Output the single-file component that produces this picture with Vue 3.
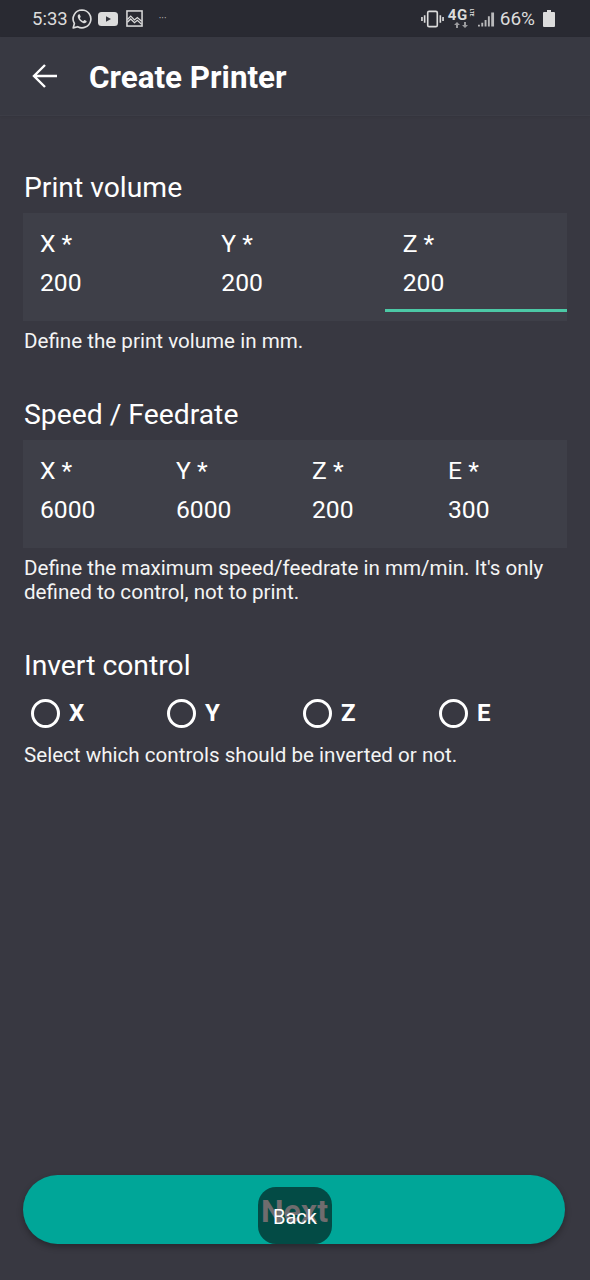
<script setup>
const volume = [
  { label: 'X *', value: '200' },
  { label: 'Y *', value: '200' },
  { label: 'Z *', value: '200', active: true },
]
const speed = [
  { label: 'X *', value: '6000' },
  { label: 'Y *', value: '6000' },
  { label: 'Z *', value: '200' },
  { label: 'E *', value: '300' },
]
const invert = ['X', 'Y', 'Z', 'E']
</script>

<template>
  <div class="page">
    <div class="status">
      <div class="status-left">
        <span class="time">5:33</span>
        <svg class="ic-wa" viewBox="0 0 24 24" width="22" height="22" fill="none">
          <path d="M12 2.2a9.7 9.7 0 0 0-8.3 14.7L2.4 21.7l4.9-1.3A9.7 9.7 0 1 0 12 2.2z" stroke="#dcdcdc" stroke-width="1.8" stroke-linejoin="round"/>
          <path d="M8.6 6.9c-.9.5-1.5 1.6-1.2 3 .6 2.9 3.6 5.9 6.4 6.6 1.5.3 2.6-.2 3.1-1.2.2-.5.2-.9.1-1l-2.2-1.1c-.2-.1-.4 0-.5.1l-.8 1c-.1.1-.3.2-.5.1-1.4-.6-2.6-1.7-3.3-3.1-.1-.2 0-.3.1-.5l.7-.9c.1-.1.1-.3 0-.5l-.9-2.2c-.1-.3-.3-.4-.6-.4z" fill="#dcdcdc"/>
        </svg>
        <svg class="ic-yt" viewBox="0 0 20 16" width="20" height="16">
          <rect x="0" y="1" width="20" height="14" rx="3.5" fill="#dcdcdc"/>
          <path d="M8 5.2l5 2.8-5 2.8z" fill="#33343c"/>
        </svg>
        <svg class="ic-img" viewBox="0 0 18 18" width="17" height="17" fill="none" stroke="#dcdcdc">
          <rect x="1" y="1" width="16" height="16" stroke-width="1.6"/>
          <path d="M1.5 10l3.5-3.5 4 4 3-2.5 4.5 4M1.5 13l3.5-3.5 4 4 3-2.5 4.5 4" stroke-width="1.3"/>
        </svg>
        <span class="dots">···</span>
      </div>
      <div class="status-right">
        <svg viewBox="0 0 24 18" width="23" height="18" fill="none" stroke="#dcdcdc" stroke-width="1.7">
          <rect x="7" y="1" width="10" height="16" rx="1.5"/>
          <path d="M3.8 5v8M1 7v4M20.2 5v8M23 7v4"/>
        </svg>
        <span class="net">
          <span class="net-top"><span class="net-main">4G</span><span class="net-sub">LTE</span></span>
          <svg class="net-arrows" viewBox="0 0 14 6" width="14" height="6" fill="#9b9b9e">
            <path d="M3 0l3 3H4v3H2V3H0zM11 6L8 3h2V0h2v3h2z"/>
          </svg>
        </span>
        <svg class="ic-sig" viewBox="0 0 18 16" width="17" height="16" fill="#b9b9bb">
          <path d="M0 16v-2h2v2zM3.5 16v-4h2v4zM7 16V9h2v7zM10.5 16V5h2v11zM14 16V1h3v15z"/>
        </svg>
        <span class="pct">66%</span>
        <svg viewBox="0 0 12 17" width="12" height="17">
          <path d="M4 0h4v2h3a1 1 0 0 1 1 1v13a1 1 0 0 1-1 1H1a1 1 0 0 1-1-1V3a1 1 0 0 1 1-1h3z" fill="#dcdcdc"/>
        </svg>
      </div>
    </div>

    <header class="appbar">
      <svg class="back" viewBox="0 0 25 24" width="25" height="24" fill="none" stroke="#fff" stroke-width="2.4">
        <path d="M25 12H2M13 1L2 12l11 11"/>
      </svg>
      <h1>Create Printer</h1>
    </header>

    <main class="content">
      <section class="sec-volume">
        <h2>Print volume</h2>
        <div class="panel cols3">
          <div v-for="f in volume" :key="f.label" class="field" :class="{ active: f.active }">
            <span class="lbl">{{ f.label }}</span>
            <span class="val">{{ f.value }}</span>
          </div>
        </div>
        <p class="help">Define the print volume in mm.</p>
      </section>

      <section class="sec-speed">
        <h2>Speed / Feedrate</h2>
        <div class="panel cols4">
          <div v-for="f in speed" :key="f.label" class="field">
            <span class="lbl">{{ f.label }}</span>
            <span class="val">{{ f.value }}</span>
          </div>
        </div>
        <p class="help">Define the maximum speed/feedrate in mm/min. It's only defined to control, not to print.</p>
      </section>

      <section class="sec-invert">
        <h2>Invert control</h2>
        <div class="radios">
          <label v-for="r in invert" :key="r" class="radio">
            <span class="circle"></span>
            <span class="radio-lbl">{{ r }}</span>
          </label>
        </div>
        <p class="help help-invert">Select which controls should be inverted or not.</p>
      </section>
    </main>

    <footer class="foot">
      <button class="next">
        <span class="back-pill"></span>
        <span class="next-txt">Next</span>
        <span class="back-txt">Back</span>
      </button>
    </footer>
  </div>
</template>

<style>
html, body { margin: 0; background: #383841; }
</style>

<style scoped>
* { box-sizing: border-box; }
.page {
  width: 590px;
  height: 1280px;
  display: flex;
  flex-direction: column;
  background: #383841;
  color: #fff;
  font-family: Roboto, "Liberation Sans", sans-serif;
  overflow: hidden;
}
.status {
  height: 37px;
  flex: none;
  background: #292a32;
  display: flex;
  justify-content: space-between;
  align-items: center;
  padding: 0 35px 0 32px;
  color: #dcdcdc;
}
.status-left, .status-right { display: flex; align-items: center; }
.status-left { gap: 4px; }
.time { font-size: 18.5px; }
.ic-wa { margin-left: -1px; }
.ic-yt { margin-left: 1px; }
.ic-img { margin-left: 4px; }
.dots { font-size: 10px; margin-left: 12px; color: #bbb; }
.status-right { gap: 3px; }
.net {
  width: 27px;
  margin-left: 1px;
  height: 19px;
  display: flex;
  flex-direction: column;
  align-items: center;
  color: #dcdcdc;
}
.net-top { display: flex; align-items: flex-start; width: 100%; height: 12px; font-weight: 700; line-height: 12px; }
.net-main { font-size: 15px; transform-origin: left center; letter-spacing: 0.6px; }
.net-sub { font-size: 4.5px; line-height: 5px; writing-mode: vertical-rl; margin-left: 1px; }
.net-arrows { margin-top: 1px; }
.ic-sig { margin-left: 0; }
.pct { font-size: 19px; margin-left: 2px; margin-right: 5px; }
.appbar {
  height: 79px;
  flex: none;
  background: #383942;
  border-bottom: 1px solid #3c3d46;
  display: flex;
  align-items: center;
  padding: 2px 0 0 32px;
  box-shadow: 0 1px 2px rgba(0, 0, 0, 0.06);
}
.back { flex: none; margin-top: -2px; }
h1 {
  margin: 0 0 0 32px;
  font-size: 31.4px;
  font-weight: 700;
  letter-spacing: 0;
}
.content { padding: 0 23px; flex: 1; }
section { display: flex; flex-direction: column; }
h2 {
  margin: 0 0 0 1px;
  font-size: 28.3px;
  line-height: 32px;
  font-weight: 400;
}
.sec-volume { padding-top: 56px; }
.sec-speed { padding-top: 46px; }
.sec-invert { padding-top: 46px; }
.panel {
  margin-top: 9px;
  height: 108px;
  background: #3e3f48;
  display: grid;
}
.cols3 { grid-template-columns: repeat(3, 1fr); }
.cols4 { grid-template-columns: repeat(4, 136px); }
.field {
  padding: 15px 0 0 17px;
  display: flex;
  flex-direction: column;
  position: relative;
}
.lbl { font-size: 24.7px; line-height: 32px; }
.val { font-size: 24.7px; line-height: 32px; margin-top: 7px; }
.field.active::after {
  content: "";
  position: absolute;
  left: -1px;
  right: 0;
  top: 96px;
  height: 3px;
  background: #4cc9a6;
}
.help {
  margin: 8px 0 0 1px;
  font-size: 20.6px;
  line-height: 24px;
  color: #f4f4f4;
}
.radios {
  display: grid;
  grid-template-columns: repeat(4, 136px);
  margin: 15px 0 0 8px;
}
.radio { display: flex; align-items: center; height: 32px; }
.circle {
  width: 29px;
  height: 29px;
  border: 3px solid #fff;
  border-radius: 50%;
}
.radio-lbl { font-size: 24px; font-weight: 700; margin-left: 9px; }
.help-invert { margin-top: 14px; }
.foot { flex: none; padding: 0 25px 36px 23px; }
.next {
  position: relative;
  display: block;
  width: 100%;
  height: 69px;
  border: 0;
  border-radius: 35px;
  background: #00a698;
  box-shadow: 0 3px 6px rgba(0, 0, 0, 0.3);
  font-family: inherit;
  padding: 0;
}
.back-pill {
  position: absolute;
  left: 235px;
  top: 12px;
  width: 74px;
  height: 57px;
  border-radius: 18px;
  background: #034b45;
}
.next-txt {
  position: absolute;
  left: 238px;
  top: 16px;
  font-size: 32px;
  line-height: 40px;
  font-weight: 700;
  color: #6f6c6e;
}
.back-txt {
  position: absolute;
  left: 250px;
  top: 30px;
  font-size: 20px;
  line-height: 24px;
  color: #fff;
}
</style>
